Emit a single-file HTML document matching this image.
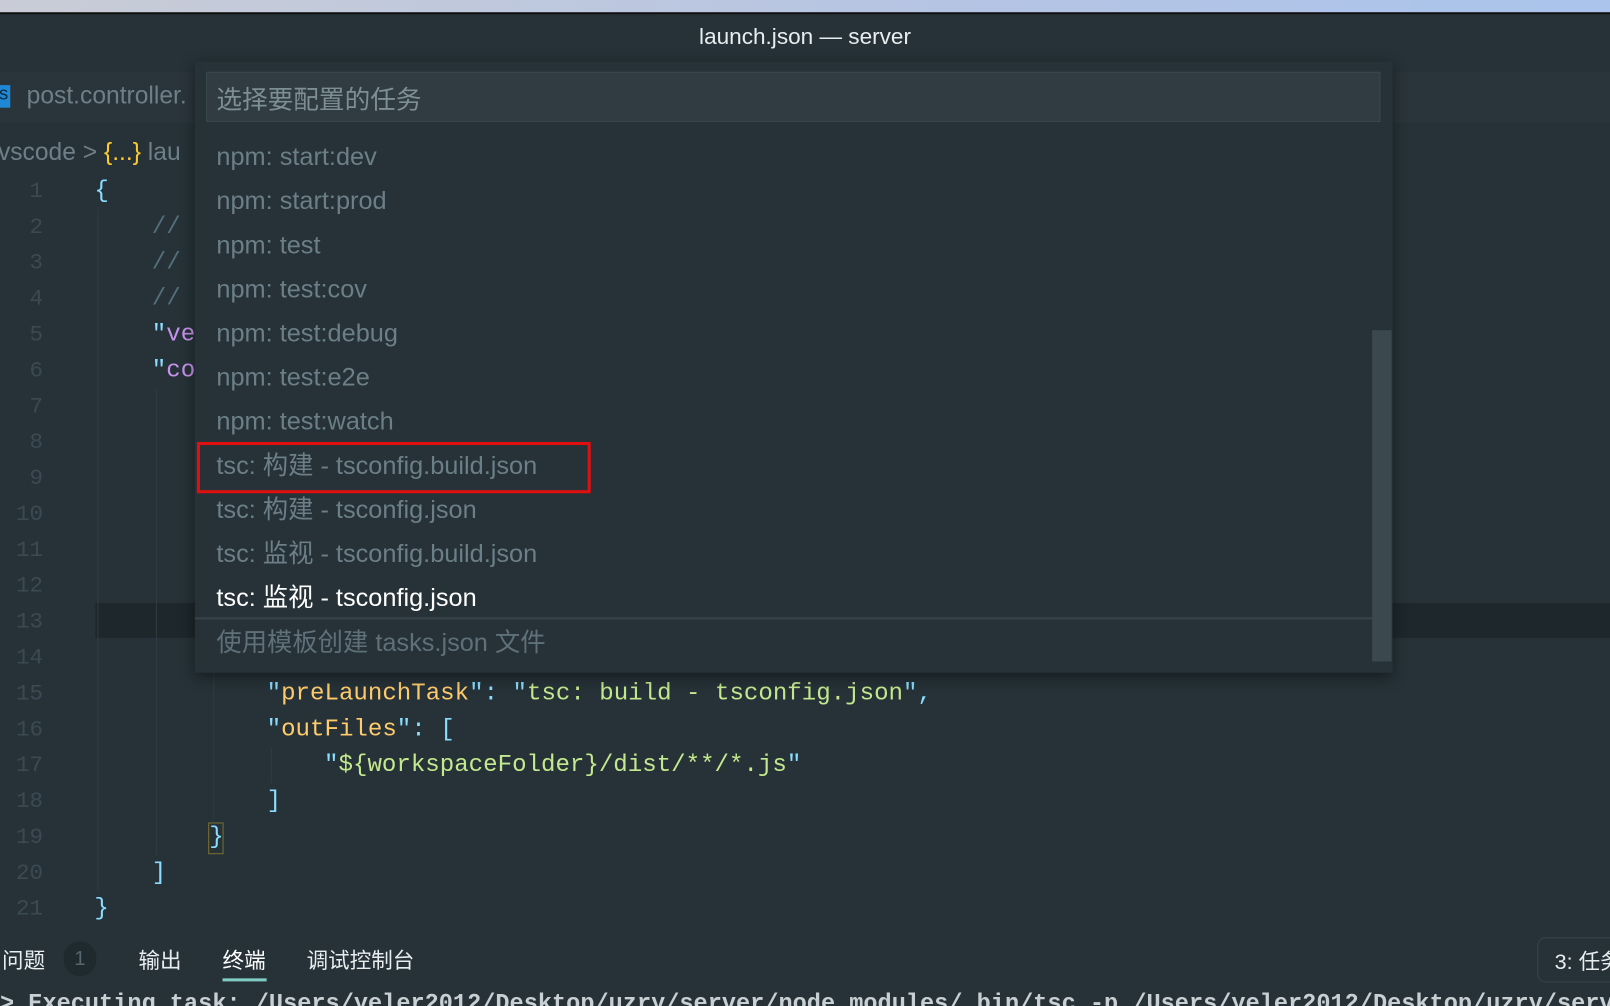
<!DOCTYPE html>
<html><head><meta charset="utf-8"><style>
*{margin:0;padding:0;box-sizing:border-box}
html,body{width:1610px;height:1006px;overflow:hidden;background:#263238;font-family:"Liberation Sans","Noto Sans CJK SC",sans-serif}
#wrap{position:absolute;left:0;top:0;width:1570px;height:981px;overflow:hidden;transform:scale(1.0255);transform-origin:0 0;background:#263238}
.abs{position:absolute;white-space:pre}
.mono{font-family:"Liberation Mono","DejaVu Sans Mono",monospace;font-size:23.5px;line-height:35px}
.ln{position:absolute;left:0;width:42px;text-align:right;color:#3b4a52;font-family:"Liberation Mono",monospace;font-size:22px;line-height:35px}
.item{position:absolute;left:211px;font-size:24.7px;color:#6c7e86;line-height:43px;white-space:pre}
.c{position:absolute;left:0;top:3px;width:1570px;height:981px}
</style></head><body><div id="wrap">
<div class="abs" style="left:0;top:0;width:1610px;height:12px;background:linear-gradient(90deg,#c9ccd6,#b5c4e4 60%,#a9c4ec)"></div>
<div class="abs" style="left:0;top:12px;width:1610px;height:2px;background:#111"></div>
<div class="abs" style="left:0;top:14px;width:1610px;height:56px;background:#263238"></div>
<div class="abs" style="left:0;top:23px;width:1570px;text-align:center;font-size:22px;color:#e8eef0">launch.json — server</div>
<div class="abs" style="left:0;top:70px;width:1610px;height:50px;background:#2a353b"></div>
<div class="abs" style="left:0;top:83px;width:10px;height:22px;background:#1e88d6"></div>
<div class="abs" style="left:-1px;top:81px;font-size:18px;color:#0b2a40">s</div>
<div class="abs" style="left:26px;top:80px;font-size:24px;color:#6e7f87">post.controller.</div>
<div class="abs" style="left:-2px;top:135px;font-size:24px;color:#6e7f87">vscode &gt; <span style="color:#ffcb2b">{...}</span> lau</div>
<div class="c">
<div class="ln" style="top:166px">1</div><div class="ln" style="top:201px">2</div><div class="ln" style="top:236px">3</div><div class="ln" style="top:271px">4</div><div class="ln" style="top:306px">5</div><div class="ln" style="top:341px">6</div><div class="ln" style="top:376px">7</div><div class="ln" style="top:411px">8</div><div class="ln" style="top:446px">9</div><div class="ln" style="top:481px">10</div><div class="ln" style="top:516px">11</div><div class="ln" style="top:551px">12</div><div class="ln" style="top:586px">13</div><div class="ln" style="top:621px">14</div><div class="ln" style="top:656px">15</div><div class="ln" style="top:691px">16</div><div class="ln" style="top:726px">17</div><div class="ln" style="top:761px">18</div><div class="ln" style="top:796px">19</div><div class="ln" style="top:831px">20</div><div class="ln" style="top:866px">21</div>
<div class="abs" style="left:93px;top:585px;width:1517px;height:34px;background:#1d272c"></div>
<div class="abs" style="left:95px;top:201px;width:1px;height:665px;background:#2f3c43"></div>
<div class="abs" style="left:152px;top:376px;width:1px;height:455px;background:#2f3c43"></div>
<div class="abs" style="left:208px;top:621px;width:1px;height:175px;background:#2f3c43"></div>
<div class="abs" style="left:264px;top:726px;width:1px;height:35px;background:#2f3c43"></div>
<div class="abs mono" style="left:92px;top:166px;color:#89ddff">{</div>
<div class="abs mono" style="left:148px;top:201px;color:#546e7a">//</div>
<div class="abs mono" style="left:148px;top:236px;color:#546e7a">//</div>
<div class="abs mono" style="left:148px;top:271px;color:#546e7a">//</div>
<div class="abs mono" style="left:148px;top:306px"><span style="color:#89ddff">"</span><span style="color:#c792ea">ve</span></div>
<div class="abs mono" style="left:148px;top:341px"><span style="color:#89ddff">"</span><span style="color:#c792ea">co</span></div>
<div class="abs mono" style="left:260px;top:656px"><span style="color:#89ddff">"</span><span style="color:#ffcb6b">preLaunchTask</span><span style="color:#89ddff">": "</span><span style="color:#c3e88d">tsc: build - tsconfig.json</span><span style="color:#89ddff">",</span></div>
<div class="abs mono" style="left:260px;top:691px"><span style="color:#89ddff">"</span><span style="color:#ffcb6b">outFiles</span><span style="color:#89ddff">": [</span></div>
<div class="abs mono" style="left:316px;top:726px"><span style="color:#89ddff">"</span><span style="color:#c3e88d">${workspaceFolder}/dist/**/*.js</span><span style="color:#89ddff">"</span></div>
<div class="abs mono" style="left:260px;top:761px;color:#89ddff">]</div>
<div class="abs" style="left:203px;top:799px;width:15px;height:31px;border:1px solid #7a7030"></div>
<div class="abs mono" style="left:204px;top:796px;color:#89ddff">}</div>
<div class="abs mono" style="left:148px;top:831px;color:#89ddff">]</div>
<div class="abs mono" style="left:92px;top:866px;color:#89ddff">}</div>
</div>
<div class="abs" style="left:190px;top:60px;width:1168px;height:596px;background:#263238;box-shadow:0 4px 14px rgba(0,0,0,.45)"></div>
<div class="abs" style="left:201px;top:70px;width:1145px;height:49px;background:#303c41;border:1px solid #3a474d"></div>
<div class="abs" style="left:211px;top:78px;font-size:25px;color:#7d8e95">选择要配置的任务</div>
<div class="item" style="top:132px">npm: start:dev</div>
<div class="item" style="top:175px">npm: start:prod</div>
<div class="item" style="top:218px">npm: test</div>
<div class="item" style="top:261px">npm: test:cov</div>
<div class="item" style="top:304px">npm: test:debug</div>
<div class="item" style="top:347px">npm: test:e2e</div>
<div class="item" style="top:390px">npm: test:watch</div>
<div class="item" style="top:433px">tsc: 构建 - tsconfig.build.json</div>
<div class="item" style="top:476px">tsc: 构建 - tsconfig.json</div>
<div class="item" style="top:519px">tsc: 监视 - tsconfig.build.json</div>
<div class="item" style="top:562px;color:#ffffff">tsc: 监视 - tsconfig.json</div>
<div class="abs" style="left:190px;top:602px;width:1148px;height:2px;background:#37444a"></div>
<div class="item" style="top:606px;color:#5f7079">使用模板创建 tasks.json 文件</div>
<div class="abs" style="left:1338px;top:322px;width:19px;height:323px;background:#3b484e"></div>
<div class="abs" style="left:192px;top:431px;width:384px;height:50px;border:3px solid #e01010"></div>
<div class="abs" style="left:2px;top:921px;font-size:21px;color:#e8eef0">问题</div>
<div class="abs" style="left:62px;top:918px;width:32px;height:34px;border-radius:16px;background:#1f2a2f;color:#55656d;font-size:20px;text-align:center;line-height:34px">1</div>
<div class="abs" style="left:135px;top:921px;font-size:21px;color:#e8eef0">输出</div>
<div class="abs" style="left:217px;top:921px;font-size:21px;color:#ffffff">终端</div>
<div class="abs" style="left:217px;top:954px;width:43px;height:3px;background:#80cbc4"></div>
<div class="abs" style="left:299px;top:921px;font-size:21px;color:#e8eef0">调试控制台</div>
<div class="abs" style="left:1499px;top:914px;width:140px;height:44px;border:1px solid #36434a;border-radius:8px"></div>
<div class="abs" style="left:1516px;top:922px;font-size:21px;color:#e8eef0">3: 任务</div>
<div class="abs" style="left:0;top:966px;font-family:'Liberation Mono',monospace;font-weight:bold;font-size:23px;color:#c8d0d4">&gt; Executing task: /Users/yeler2012/Desktop/uzry/server/node_modules/.bin/tsc -p /Users/yeler2012/Desktop/uzry/server/tsconfig.json</div>
</div></body></html>
